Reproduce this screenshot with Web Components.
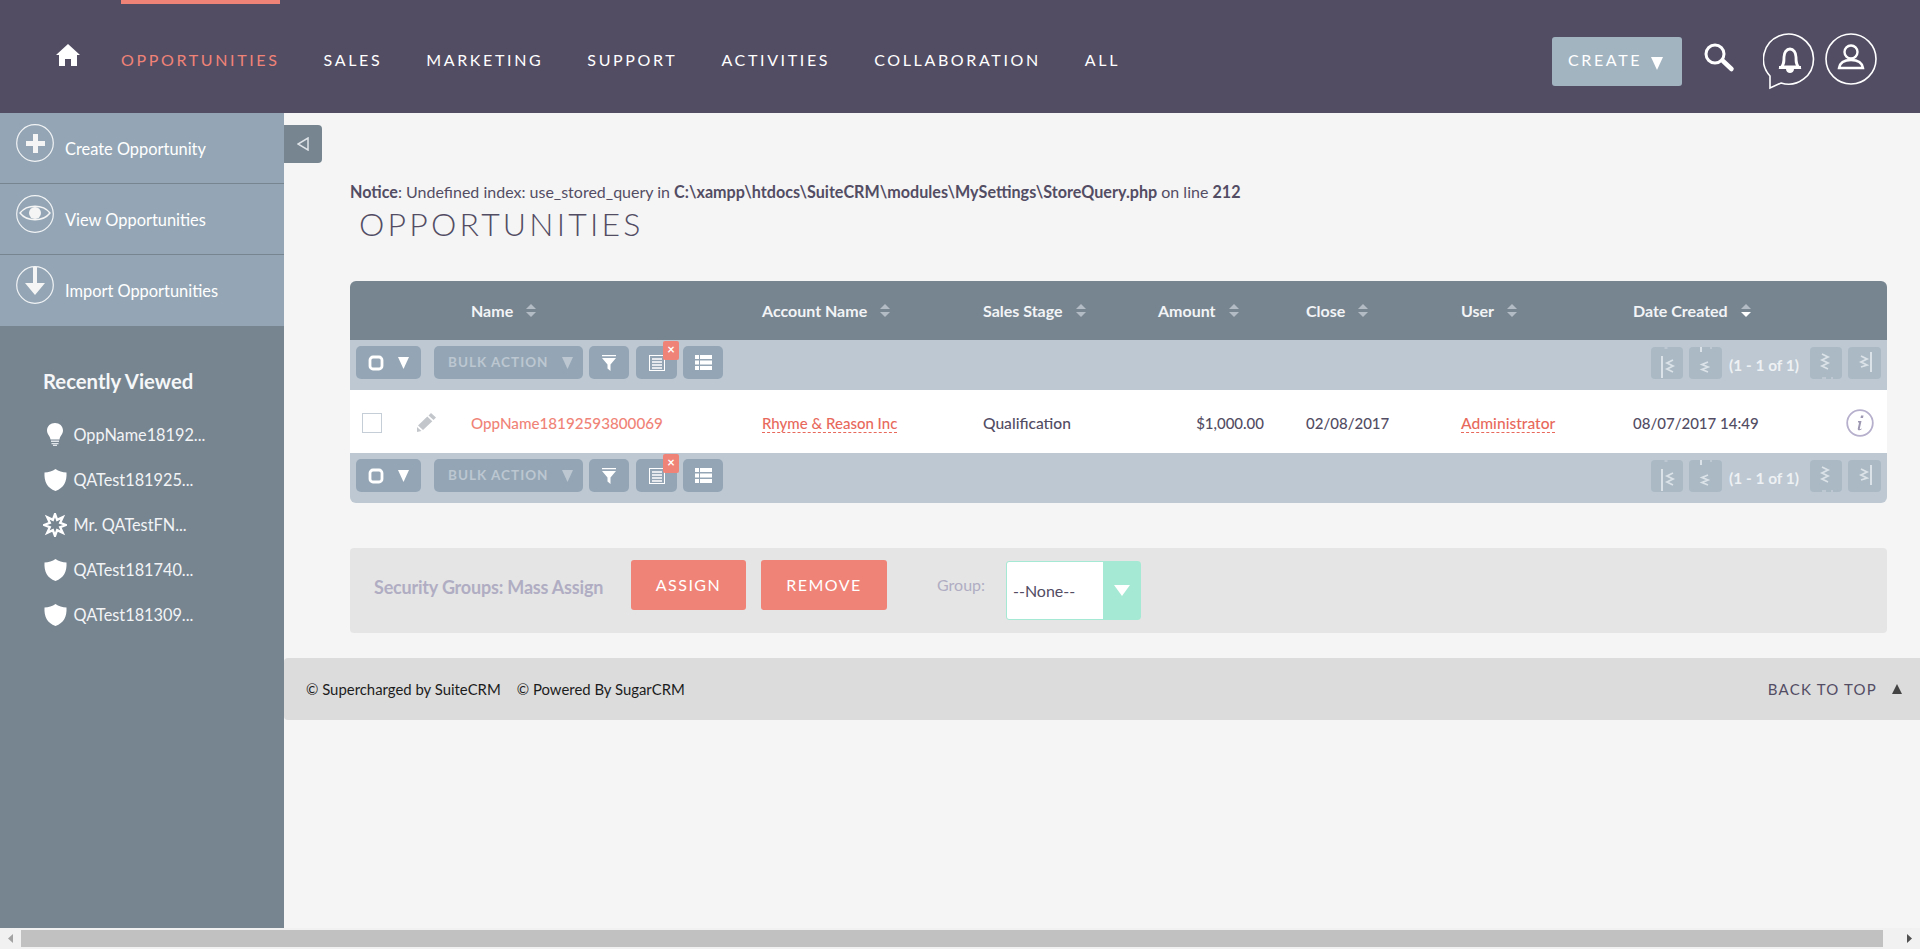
<!DOCTYPE html>
<html lang="en">
<head>
<meta charset="utf-8">
<title>Opportunities</title>
<style>
  html, body { margin: 0; height: 100%; overflow: hidden; }
  body { background: #f5f5f5; font-family: Lato, "Liberation Sans", sans-serif; color: #534d64; }
</style>
</head>
<body>
<crm-app>
  <crm-header slot="top"></crm-header>
  <crm-sidebar slot="side"></crm-sidebar>
  <crm-content slot="main"></crm-content>
  <crm-scrollbar slot="bottom"></crm-scrollbar>
</crm-app>

<script>
// 8 point star outline, the contact icon in the recent list
const starPath = () => {
  let d = '';
  for (let i = 0; i < 16; i++) {
    const r = i % 2 ? 5.6 : 11;
    const a = i * Math.PI / 8 - Math.PI / 2;
    d += `${i ? 'L' : 'M'}${(12 + r * Math.cos(a)).toFixed(2)} ${(12 + r * Math.sin(a)).toFixed(2)}`;
  }
  return d + 'z';
};

const pagerLine = '#dce3e8';
const icons = {
  home: '<svg width="24" height="22" viewBox="0 0 24 22"><path fill="#fff" d="M12 0 24 11h-3v11h-6v-7H9v7H3V11H0z"/></svg>',
  search: '<svg width="31" height="30" viewBox="0 0 31 30" fill="none" stroke="#fff"><circle cx="11" cy="11" r="9" stroke-width="3"/><path d="M19 18l8.500 8" stroke-width="4.500" stroke-linecap="round"/></svg>',
  bell: '<svg width="54" height="58" viewBox="0 0 54 58" fill="none"><path stroke="#fff" stroke-width="1.6" d="M7 43A25 25 0 1 1 18 50L7 55z"/><path fill="none" stroke="#fff" stroke-width="2.800" d="M18.500 34c2.500-3 2.500-5 2.500-10 0-4.500 2.500-8 6-8s6 3.500 6 8c0 5 0 7 2.500 10z"/><path fill="#fff" d="M16 33h22v3H16zM23 36h8c0 2.500-2 4-4 4s-4-1.500-4-4z"/></svg>',
  user: '<svg width="52" height="52" viewBox="0 0 52 52" fill="none" stroke="#fff"><circle cx="26" cy="26" r="25" stroke-width="1.6"/><circle cx="26" cy="19" r="6.5" stroke-width="2.4"/><path stroke-width="2.4" d="M14 35c1-6 6-8 12-8s11 2 12 8z"/></svg>',
  plus: '<svg width="38" height="38" viewBox="0 0 38 38" fill="none"><circle cx="19" cy="19" r="18.3" stroke="#f1f3f5" stroke-width="1.2"/><path fill="#f5f5f5" d="M17 10h5v7h7v5h-7v7h-5v-7h-7v-5h7z"/></svg>',
  eye: '<svg width="38" height="38" viewBox="0 0 38 38" fill="none"><circle cx="19" cy="19" r="18.3" stroke="#f1f3f5" stroke-width="1.2"/><path stroke="#f5f5f5" stroke-width="1.4" d="M4 18c7-9 23-9 30 0-7 9-23 9-30 0z"/><circle cx="19" cy="18" r="6" fill="#f5f5f5"/></svg>',
  down: '<svg width="38" height="38" viewBox="0 0 38 38" fill="none"><circle cx="19" cy="19" r="18.3" stroke="#f1f3f5" stroke-width="1.2"/><path fill="#f5f5f5" d="M17 1h4v16h8L19 29 9 17h8z"/></svg>',
  bulb: '<svg width="16" height="23" viewBox="0 0 16 23"><path fill="#fff" d="M8 0c4.500 0 8 3 8 7.500 0 3.500-3 5.500-3.500 9h-9C3 13 0 11 0 7.500 0 3 3.500 0 8 0z"/><path fill="#dfe4e8" d="M4 17.500h8v1.500H4zM4.500 20h7v1.300h-7zM6 21.800h4V23H6z"/></svg>',
  shield: '<svg width="23" height="22" viewBox="0 0 23 22"><path fill="#fff" d="M11.500 0c3 2.300 7 3.500 11 3.500.5 9-2.500 15.500-11 18.500C3 19 0 12.500.5 3.500c4 0 8-1.200 11-3.500z"/></svg>',
  star: `<svg width="24" height="24" viewBox="0 0 24 24"><path fill="none" stroke="#fff" stroke-width="2.300" stroke-miterlimit="10" d="${starPath()}"/></svg>`,
  sort: (c = '#b3bcc4') => `<svg width="10" height="13" viewBox="0 0 10 13"><path fill="#b3bcc4" d="M5 0l5 5H0z"/><path fill="${c}" d="M0 8h10l-5 5z"/></svg>`,
  square: '<svg width="16" height="16" viewBox="0 0 16 16" fill="none"><rect x="2" y="2" width="12" height="12" rx="3" stroke="#fff" stroke-width="2.800"/></svg>',
  tri: (c = '#fff', w = 11, h = 12) => `<svg width="${w}" height="${h}" viewBox="0 0 ${w} ${h}"><path fill="${c}" d="M0 0h${w}L${w / 2} ${h}z"/></svg>`,
  filter: '<svg width="14" height="16" viewBox="0 0 14 16"><path fill="#fff" d="M0 0h14v1.200H0zM0 3h14L8.500 9.500V16l-3-2.500v-4z"/></svg>',
  columns: '<svg width="16" height="16" viewBox="0 0 16 16" fill="none" stroke="#fff"><rect x=".5" y=".5" width="15" height="15"/><path stroke-width="1.400" d="M3 4h10M3 7h10M3 10h10M3 13h10"/></svg>',
  list: '<svg width="17" height="15" viewBox="0 0 17 15"><path fill="#fff" d="M0 0h4v4H0zM5 0h12v4H5zM0 5.500h4v4H0zM5 5.500h12v4H5zM0 11h4v4H0zM5 11h12v4H5z"/></svg>',
  pencil: '<svg width="19" height="19" viewBox="0 0 19 19"><path fill="#c3c7cc" d="M14 0l5 4.500-2.500 2.500-5-4.500zM10.300 3.600l5 4.600L6 17l-5-4.500zM0 14l4.500 4L0 19z"/></svg>',
  info: '<svg width="28" height="28" viewBox="0 0 28 28" fill="none"><circle cx="14" cy="14" r="12.800" stroke="#b7b0cd" stroke-width="1.800"/><path fill="#9d97b2" d="M15 6.500h2.500l-.5 2.500h-2.500zM12 12h3.500l-1.700 7.500c-.2.800.6.800 1.700 0l.3.500c-1.500 1.500-4.500 2-4-.5l1.300-6H12z"/></svg>',
  // pager sprites: same box as the button, with the little nicks of the original
  first: `<svg width="32" height="32" viewBox="0 0 32 32" fill="none" stroke="${pagerLine}"><path stroke="#bdc8d2" stroke-width="3" d="M15 0v2"/><path stroke-width="2" d="M11 9v22"/><path stroke-width="1.800" d="M22 13l-6 3 6 3-6 3 6 3"/></svg>`,
  prev: `<svg width="33" height="32" viewBox="0 0 33 32" fill="none" stroke="${pagerLine}"><path stroke-width="2" d="M12 0v5"/><path stroke="#bdc8d2" stroke-width="2" d="M22 0v2"/><path stroke-width="1.800" d="M19 15l-6 2.500 6 2.500-6 2.500 6 2.500"/></svg>`,
  next: `<svg width="32" height="32" viewBox="0 0 32 32" fill="none" stroke="${pagerLine}"><path stroke="#bdc8d2" stroke-width="2" d="M13 30v2M22 30v2M15 30v2"/><path stroke-width="1.800" d="M12 7l6 3-6 3 6 3-6 3 6 3"/></svg>`,
  last: `<svg width="33" height="32" viewBox="0 0 33 32" fill="none" stroke="${pagerLine}"><path stroke-width="2" d="M23 5v20"/><path stroke-width="1.800" d="M13 9l6 3-6 3 6 3-6 2"/></svg>`
};

// small helper so every element below stays a couple of lines
const define = (name, css, html) => {
  customElements.define(name, class extends HTMLElement {
    constructor() {
      super();
      this.attachShadow({ mode: 'open' });
      const body = typeof html === 'function' ? html(this) : html;
      this.shadowRoot.innerHTML = `<style>*{box-sizing:border-box}${css}</style>${body}`;
    }
  });
};

define('crm-app', `
  :host { display: flex; flex-direction: column; height: 100vh; }
  .mid { flex: 1; display: flex; min-height: 0; }
`, `<slot name="top"></slot><div class="mid"><slot name="side"></slot><slot name="main"></slot></div><slot name="bottom"></slot>`);

define('crm-header', `
  :host { display: flex; height: 113px; background: #534d64; flex: none; color: #fff; font-size: 16px; letter-spacing: 2.640px; }
  .home { margin: 44px 41px 0 56px; height: 22px; }
  nav { display: flex; gap: 44px; flex: 1; }
  a { display: block; padding-top: 46px; height: 113px; line-height: 19px; border-top: 4px solid transparent; }
  a.on { color: #f08377; border-top-color: #f08377; }
  .create { width: 130px; height: 49px; margin: 37px 22px 0 0; background: #a3b4c1; border-radius: 3px; display: flex; align-items: center; padding: 0 0 0 16px; gap: 9px; }
  .create span { margin-top: -5px; }
  .create svg { margin-top: 4px; }
  .search { margin: 43px 28px 0 0; height: 30px; }
  .bell { margin: 33px 8px 0 0; }
  .user { margin: 33px 43px 0 0; }
  svg { display: block; }
`, `
  <div class="home">${icons.home}</div>
  <nav>
    <a class="on">OPPORTUNITIES</a><a>SALES</a><a>MARKETING</a><a>SUPPORT</a><a>ACTIVITIES</a><a>COLLABORATION</a><a>ALL</a>
  </nav>
  <div class="create"><span>CREATE</span>${icons.tri('#fff', 12, 13)}</div>
  <div class="search">${icons.search}</div>
  <div class="bell">${icons.bell}</div>
  <div class="user">${icons.user}</div>
`);

define('crm-action', `
  :host { display: flex; height: 71px; background: #94a6b5; border-bottom: 1px solid #778591; color: #fff; font-size: 16.400px; padding: 11px 0 0 16px; gap: 11px; }
  :host(:last-of-type) { border-bottom: 0; }
  span { margin-top: 14px; line-height: 22px; }
  svg { display: block; }
`, el => `<div>${icons[el.getAttribute('icon')]}</div><span><slot></slot></span>`);

define('crm-recent', `
  :host { display: flex; align-items: center; height: 45px; color: #f2f4f6; font-size: 16.300px; }
  .ic { width: 30px; padding-left: 14px; flex: none; display: flex; justify-content: center; }
  svg { display: block; flex: none; }
`, el => `<div class="ic">${icons[el.getAttribute('icon')]}</div><div style="margin-left:10.500px"><slot></slot></div>`);

define('crm-sidebar', `
  :host { display: block; width: 284px; flex: none; background: #778591; }
  h3 { margin: 0; padding: 43px 0 0 43px; height: 86px; font-size: 20.300px; line-height: 24px; font-weight: 700; color: #f5f7f8; }
  .list { padding-left: 33px; }
`, `
  <crm-action icon="plus">Create Opportunity</crm-action>
  <crm-action icon="eye">View Opportunities</crm-action>
  <crm-action icon="down">Import Opportunities</crm-action>
  <h3>Recently Viewed</h3>
  <div class="list">
    <crm-recent icon="bulb">OppName18192...</crm-recent>
    <crm-recent icon="shield">QATest181925...</crm-recent>
    <crm-recent icon="star">Mr. QATestFN...</crm-recent>
    <crm-recent icon="shield">QATest181740...</crm-recent>
    <crm-recent icon="shield">QATest181309...</crm-recent>
  </div>
`);

define('crm-toolbar', `
  :host { display: flex; height: 50px; background: #bdc8d2; padding: 6px 6px 0 6px; }
  .b { height: 33px; background: #94a6b5; border-radius: 5px; display: flex; align-items: center; justify-content: center; position: relative; }
  .sel { width: 65px; gap: 14px; }
  .bulk { width: 149px; margin-left: 13px; color: #bcc7d1; font-size: 13.500px; font-weight: 700; letter-spacing: 1px; justify-content: flex-start; padding-left: 14px; gap: 14px; }
  .bulk span { margin-top: -2px; }
  .icon { width: 40px; margin-left: 6px; }
  .cols { width: 41px; margin-left: 7px; }
  .x { position: absolute; left: 27px; top: -5px; width: 16px; height: 19px; background: #f08377; border-radius: 2px; color: #fff; font-size: 13px; font-weight: 700; line-height: 17px; text-align: center; }
  .pager { margin-left: auto; display: flex; align-items: flex-start; color: #eef1f4; font-size: 15.400px; font-weight: 700; }
  .p { width: 33px; height: 32px; margin-top: 1px; background: #aab9c4; border-radius: 4px; }
  .p.n { width: 32px; }
  .p + .p { margin-left: 6px; }
  .t { width: 88px; padding-right: 4px; text-align: center; line-height: 38px; white-space: nowrap; }
  svg { display: block; }
`, `
  <div class="b sel">${icons.square}${icons.tri('#fff', 11, 12)}</div>
  <div class="b bulk"><span>BULK ACTION</span>${icons.tri('#bcc7d1', 11, 12)}</div>
  <div class="b icon">${icons.filter}</div>
  <div class="b cols">${icons.columns}<div class="x">×</div></div>
  <div class="b icon">${icons.list}</div>
  <div class="pager">
    <div class="p n">${icons.first}</div><div class="p">${icons.prev}</div>
    <div class="t">(1 - 1 of 1)</div>
    <div class="p n">${icons.next}</div><div class="p">${icons.last}</div>
  </div>
`);

const gridCols = 'grid-template-columns: 121px 291px 221px 175px 148px 155px 172px 1fr;';

define('crm-list', `
  :host { display: block; margin: 0 33px 0 66px; border-radius: 6px; overflow: hidden; font-size: 15px; }
  .head, .row { display: grid; ${gridCols} align-items: center; }
  .head { height: 59px; background: #778591; color: #f2f4f6; font-size: 16px; font-weight: 700; }
  .head > div { display: flex; align-items: center; gap: 13px; }
  .head svg { display: block; }
  .row { height: 63px; padding-top: 2px; background: #fff; color: #534d64; font-weight: 500; }
  .ctl { display: flex; align-items: center; padding-left: 12px; gap: 35px; }
  .box { width: 20px; height: 20px; border: 1px solid #c5ced6; background: #fff; }
  .link { color: #f08377; font-size: 15.200px; }
  .dash { color: #e8695c; border-bottom: 1px dashed #e8695c; }
  .wide { font-size: 15.600px; }
  .amt { text-align: right; padding-right: 42px; }
  .end { display: flex; justify-content: space-between; align-items: center; padding-right: 13px; }
  svg { display: block; }
`, () => {
  const heads = ['Name', 'Account Name', 'Sales Stage', 'Amount', 'Close', 'User', 'Date Created'];
  return `
  <div class="head"><div></div>${heads.map((h, i) => `<div>${h}${icons.sort(i === 6 ? '#fff' : '#b3bcc4')}</div>`).join('')}</div>
  <crm-toolbar></crm-toolbar>
  <div class="row">
    <div class="ctl"><div class="box"></div>${icons.pencil}</div>
    <div class="link">OppName18192593800069</div>
    <div><span class="dash">Rhyme &amp; Reason Inc</span></div>
    <div class="wide">Qualification</div>
    <div class="amt">$1,000.00</div>
    <div>02/08/2017</div>
    <div><span class="dash wide">Administrator</span></div>
    <div class="end"><span>08/07/2017 14:49</span>${icons.info}</div>
  </div>
  <crm-toolbar></crm-toolbar>`;
});

define('crm-mass-assign', `
  :host { display: flex; height: 85px; margin: 45px 33px 0 66px; padding: 12px 0 0 24px; background: #e5e5e5; border-radius: 4px; }
  h4 { margin: 0; width: 257px; padding-top: 15px; font-size: 18px; line-height: 24px; font-weight: 700; color: #b0adc3; letter-spacing: -.2px; }
  button { height: 50px; background: #f08377; border: 0; border-radius: 3px; color: #fff; font: 16px Lato, "Liberation Sans", sans-serif; letter-spacing: 1.500px; padding: 0 0 2px; }
  .as { width: 115px; margin-right: 15px; }
  .re { width: 126px; }
  label { margin: 13px 0 0 50px; width: 69px; font-size: 16px; line-height: 24px; color: #b0adc3; }
  .sel { width: 135px; height: 59px; margin-top: 1px; border: 1px solid #a5e8d3; border-radius: 3px; background: #fff; display: flex; font-size: 16px; }
  .sel span { flex: 1; padding: 18px 0 0 6px; line-height: 22px; color: #534d64; }
  .arr { width: 37px; background: #a5e8d3; display: flex; justify-content: center; padding-top: 23px; }
`, `
  <h4>Security Groups: Mass Assign</h4>
  <button class="as">ASSIGN</button><button class="re">REMOVE</button>
  <label>Group:</label>
  <div class="sel"><span>--None--</span><div class="arr">${icons.tri('#fff', 16, 11)}</div></div>
`);

define('crm-footer', `
  :host { display: flex; align-items: center; height: 62px; margin-top: 25px; padding: 0 18px 0 22px; background: #dcdcdc; border-radius: 4px 0 0 4px; font-size: 14.900px; color: #1c1c1c; }
  span + span { margin-left: 16px; }
  .top { margin-left: auto; color: #534d64; font-size: 15px; letter-spacing: 1.200px; display: flex; align-items: center; gap: 15px; }
  svg { display: block; transform: rotate(180deg); }
`, `
  <span>© Supercharged by SuiteCRM</span><span>© Powered By SugarCRM</span>
  <div class="top">BACK TO TOP ${icons.tri('#444', 10, 10)}</div>
`);

define('crm-content', `
  :host { display: block; flex: 1; min-width: 0; }
  .tab { width: 38px; height: 38px; margin-top: 12px; background: #778591; border-radius: 0 4px 4px 0; display: flex; align-items: center; justify-content: center; }
  .notice { margin: 19px 0 0 66px; font-size: 16px; line-height: 20px; }
  h1 { margin: 0 0 0 75px; height: 79px; padding-top: 2px; font-size: 32px; line-height: 40px; font-weight: 300; letter-spacing: 3.200px; }
  b { font-weight: 700; font-size: 16.150px; }
  svg { display: block; }
`, `
  <div class="tab"><svg width="12" height="14" viewBox="0 0 12 14" fill="none" stroke="#dfe4e8" stroke-width="1.500"><path d="M11 1v12L1 7z"/></svg></div>
  <div class="notice"><b>Notice</b>: Undefined index: use_stored_query in <b>C:\\xampp\\htdocs\\SuiteCRM\\modules\\MySettings\\StoreQuery.php</b> on line <b>212</b></div>
  <h1>OPPORTUNITIES</h1>
  <crm-list></crm-list>
  <crm-mass-assign></crm-mass-assign>
  <crm-footer></crm-footer>
`);

define('crm-scrollbar', `
  :host { display: flex; align-items: center; height: 21px; flex: none; background: #f1f1f1; }
  .arr { width: 21px; display: flex; justify-content: center; }
  .thumb { flex: 1; height: 17px; background: #c1c1c1; }
  svg { display: block; }
`, `
  <div class="arr"><svg width="5" height="9" viewBox="0 0 5 9"><path fill="#a3a3a3" d="M5 0v9L0 4.500z"/></svg></div>
  <div class="thumb"></div><div style="width:16px"></div>
  <div class="arr"><svg width="5" height="9" viewBox="0 0 5 9"><path fill="#505050" d="M0 0v9l5-4.500z"/></svg></div>
`);
</script>
</body>
</html>
